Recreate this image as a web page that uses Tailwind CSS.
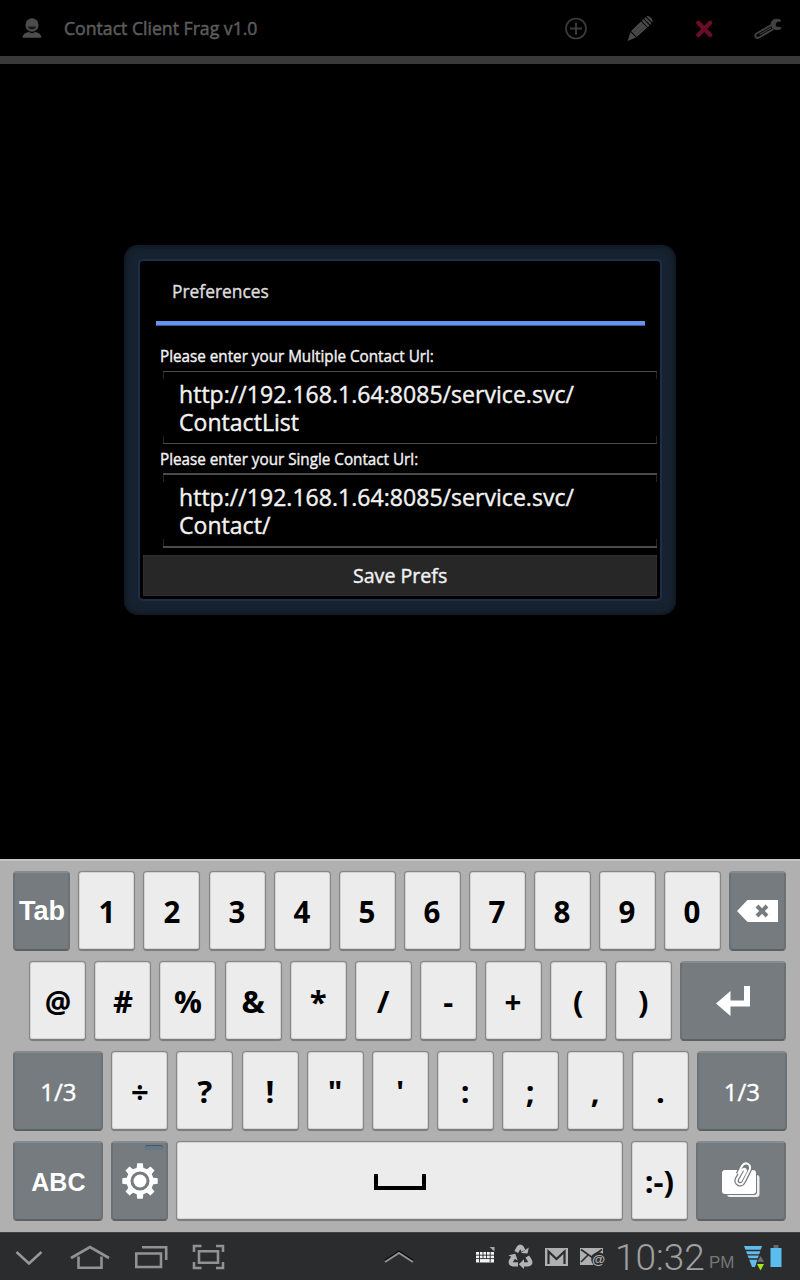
<!DOCTYPE html>
<html lang="en">
<head>
<meta charset="utf-8">
<title>Contact Client Frag</title>
<script src="https://cdn.jsdelivr.net/npm/@tailwindcss/browser@4"></script>
</head>
<body class="bg-black">
<div class="w-[800px] h-[1280px] flex flex-col bg-black overflow-hidden font-['Open_Sans','Noto_Sans',sans-serif] whitespace-nowrap">

  <!-- Action bar -->
  <header class="h-[64px] shrink-0 flex items-center border-b-8 border-[#393939] pl-[22px] pr-[18px] text-[#5c5c5c]">
    <svg class="w-[20px] h-[20px]" viewBox="0 0 20 20" fill="#4c4c4c"><ellipse cx="10" cy="7" rx="6.6" ry="6.8"/><path d="M6 8.500H14C13.500 10.800 12.300 11.500 10 11.500S6.500 10.800 6 8.500Z" fill="#181818"/><path d="M0.500 19.700C0.800 16.500 3 14.500 6.500 14L10 15.300 13.500 14C17 14.500 19.200 16.500 19.500 19.700Z"/></svg>
    <h1 class="ml-[22px] text-[18px] leading-6 [-webkit-text-stroke:0.5px]"><span class="inline-block origin-left scale-x-[0.98]">Contact Client Frag v1.0</span></h1>
    <div class="ml-auto flex items-center gap-[36px]">
      <svg class="w-[28px] h-[28px]" viewBox="0 0 28 28" fill="none" stroke="#3c3c3c" stroke-width="1.700"><circle cx="14" cy="14.500" r="10"/><path d="M8 14.500H20M14 8.500V20.500" stroke-width="1.900"/></svg>
      <svg class="w-[28px] h-[28px]" viewBox="0 0 28 28" fill="#4a4a4a"><path d="M1.500 27L4.500 18 10 23.500Z"/><path d="M5 17L15 7.500 21 13.500 10.800 23Z"/><path d="M15.700 6.700L17.500 5.200 23.500 11.500 21.700 13.200ZM18.200 4.500L19.800 3.300 25.500 9.300 24.200 10.800ZM20.500 2.500C22.500.5 28 5.500 26.300 8.500Z"/><path d="M8 18L16.500 10M10 20.500L19 12.500" stroke="#303030" stroke-width=".7"/></svg>
      <svg class="w-[28px] h-[28px]" viewBox="0 0 28 28" stroke="#6b0d29" stroke-width="4.400" stroke-linecap="round"><path d="M8.300 8.800L20.200 21M20.200 8.800L8.300 21"/></svg>
      <svg class="w-[28px] h-[28px]" viewBox="0 0 28 28" fill="none" stroke="#424242" stroke-width="2"><path d="M17.300 11L2.500 19.500C0 21 2 25.500 5 23.500L19.500 15"/><path d="M5.500 20.500L17 13.700" stroke-width="1.100"/><path d="M26.300 5.800C21.500 4 16.700 6 17 10.500 17.300 15.500 24 17 27 14.500L26.500 13.200C22.500 13.800 21 12.500 21.500 10 22 7.800 23.500 7.300 26.300 7.300Z" fill="#424242" stroke-width=".8"/></svg>
    </div>
  </header>

  <!-- Dialog -->
  <main class="flex-1 pt-[181px] flex justify-center items-start">
    <section class="w-[552px] h-[370px] rounded-[14px] bg-[#172230] p-[14px] shadow-[inset_0_0_6px_#0a0e14]">
      <div class="w-[524px] h-[342px] rounded-[5px] border-2 border-[#1e2e48] bg-black text-[#f2f2f2] px-[3px] flex flex-col [-webkit-text-stroke:0.4px]">
        <h2 class="h-[60px] pl-[29px] pt-[18px] text-[18px] leading-6 text-[#dcdcdc]"><span class="inline-block origin-left scale-x-[0.965]">Preferences</span></h2>
        <div class="ml-[12.600px] w-[489px] h-[4px] bg-[#6594ec] shadow-[0_1px_0_#3c5b92]"></div>
        <label class="h-[46px] pl-[17px] pt-[20px] text-[16px] leading-[22px]"><span class="inline-block origin-left scale-x-[0.952]">Please enter your Multiple Contact Url:</span></label>
        <div class="relative ml-[20px] w-[494px] h-[73px] border-y border-[#4b4b4b] pl-[16px] pt-[8px] text-[23px] leading-[28px]">
          <i class="absolute left-0 top-0 w-px h-[7px] bg-[#242424]"></i><i class="absolute right-0 top-0 w-px h-[7px] bg-[#242424]"></i><i class="absolute left-0 bottom-0 w-px h-[7px] bg-[#242424]"></i><i class="absolute right-0 bottom-0 w-px h-[7px] bg-[#242424]"></i>
          <p class="tracking-[0.04px]">http://192.168.1.64:8085/service.svc/<br>ContactList</p>
        </div>
        <label class="h-[29px] pl-[17px] pt-[4px] text-[16px] leading-[22px]"><span class="inline-block origin-left scale-x-[0.952]">Please enter your Single Contact Url:</span></label>
        <div class="relative ml-[20px] w-[494px] h-[75px] border-y-2 border-[#4b4b4b] pl-[16px] pt-[8px] text-[23px] leading-[28px]">
          <i class="absolute left-0 top-0 w-px h-[7px] bg-[#242424]"></i><i class="absolute right-0 top-0 w-px h-[7px] bg-[#242424]"></i><i class="absolute left-0 bottom-0 w-px h-[7px] bg-[#242424]"></i><i class="absolute right-0 bottom-0 w-px h-[7px] bg-[#242424]"></i>
          <p class="tracking-[0.04px]">http://192.168.1.64:8085/service.svc/<br>Contact/</p>
        </div>
        <button class="mt-[7px] w-[514px] h-[41px] bg-[#272727] border border-[#2e2e2e] text-[20px] leading-[37px]"><span class="inline-block scale-x-[0.98]">Save Prefs</span></button>
      </div>
    </section>
  </main>

  <!-- Keyboard -->
  <section class="h-[373px] shrink-0 bg-[#b0b0b0] border-t-2 border-[#c6c6c6] pt-[10px] pl-[13.400px] flex flex-col gap-[10px] text-black font-bold text-[31px] [&>div]:flex [&>div]:gap-[8.050px] [&>div]:h-[80px] [&_span]:w-[57px] [&_span]:flex [&_span]:items-center [&_span]:justify-center [&_span]:pt-[2px] [&_span]:border [&_span]:border-[#868686] [&_span]:border-b-2 [&_span]:border-b-[#7d7d7d] [&_span]:shadow-[inset_0_0_0_1px_#d4d4d4,0_0_1px_#909090] [&_span]:rounded-[4px] [&_span]:bg-[#ececec] [&_em]:not-italic [&_em]:inline-block [&_em]:scale-x-[0.95] [&_b]:flex [&_b]:items-center [&_b]:justify-center [&_b]:rounded-[4px] [&_b]:border-2 [&_b]:border-[#6b7174] [&_b]:border-t-[#858b8e] [&_b]:border-b-[#5c6163] [&_b]:bg-[#757b7e] [&_b]:text-white">
    <div>
      <b class="w-[57px] font-['Liberation_Sans',sans-serif] text-[27px]">Tab</b><span><em>1</em></span><span><em>2</em></span><span><em>3</em></span><span><em>4</em></span><span><em>5</em></span><span><em>6</em></span><span><em>7</em></span><span><em>8</em></span><span><em>9</em></span><span><em>0</em></span>
      <b class="w-[57px]"><svg class="w-[41px] h-[22px] shrink-0" viewBox="0 0 41 22"><path d="M0 11L10.500 0H41V22H10.500Z" fill="#fff"/><path d="M20 6L30 16M30 6L20 16" stroke="#757b7e" stroke-width="4"/></svg></b>
    </div>
    <div class="pl-[16px]">
      <span><em>@</em></span><span>#</span><span>%</span><span>&amp;</span><span>*</span><span>/</span><span>-</span><span><em>+</em></span><span>(</span><span>)</span>
      <b class="w-[106px]"><svg class="w-[34px] h-[30px]" viewBox="0 0 34 30" fill="#fff"><path d="M0 17.500L14.500 5V14.500H28V0H34V20.500H14.500V30Z"/></svg></b>
    </div>
    <div>
      <b class="w-[90px] font-medium text-[24px] pt-[2px] [-webkit-text-stroke:0.4px]">1/3</b><span>÷</span><span>?</span><span>!</span><span>"</span><span>'</span><span>:</span><span>;</span><span>,</span><span>.</span><b class="w-[90px] font-medium text-[24px] pt-[2px] [-webkit-text-stroke:0.4px]">1/3</b>
    </div>
    <div>
      <b class="w-[90px] pt-[3px] font-['Liberation_Sans',sans-serif] text-[25px]">ABC</b>
      <b class="w-[57px] relative"><i class="absolute right-[3px] top-[2px] w-[18px] h-[5px] rounded-full bg-[#65788a] border-t border-[#485661]"></i>
        <svg class="w-[36px] h-[36px]" viewBox="-18 -18 36 36" fill="#fff"><circle r="11.500" fill="none" stroke="#fff" stroke-width="4"/><circle r="6.500"/><g><path id="t" d="M-3.500 -12L-2.800 -17.700H2.800L3.500 -12Z"/><use href="#t" transform="rotate(45)"/><use href="#t" transform="rotate(90)"/><use href="#t" transform="rotate(135)"/><use href="#t" transform="rotate(180)"/><use href="#t" transform="rotate(225)"/><use href="#t" transform="rotate(270)"/><use href="#t" transform="rotate(315)"/></g></svg></b>
      <span class="!w-[446.300px]"><svg class="w-[52px] h-[16px]" viewBox="0 0 52 16"><path d="M2 0V14H50V0" fill="none" stroke="#000" stroke-width="4"/></svg></span>
      <span>:-)</span>
      <b class="w-[90px]"><svg class="w-[38px] h-[36px] -mt-[2px]" viewBox="0 0 38 36" fill="none"><rect x="5" y="13" width="32.500" height="22" rx="3" fill="#f0f0f0"/><rect x="0" y="8" width="35" height="25" rx="3" fill="#757b7e"/><rect x="0" y="8" width="34" height="24" rx="3" fill="#fff"/><path d="M16 12L20 4C23-1 30 2 27.500 8L21.500 20C19 24.500 13 21.500 15 17L20 8" stroke="#757b7e" stroke-width="4.600"/><path d="M16 12L20 4C23-1 30 2 27.500 8L21.500 20C19 24.500 13 21.500 15 17L20 8.500C22 5.500 25 7 23.500 10L18.500 19" stroke="#fff" stroke-width="2"/></svg></b>
    </div>
  </section>

  <!-- System bar -->
  <footer class="h-[48px] shrink-0 bg-[#2b2c2e] border-t border-[#404143] flex items-center text-[#a0a0a0]">
    <svg class="ml-[15px] w-[28px] h-[16px] mt-[3px]" viewBox="0 0 28 16" fill="none" stroke="#999" stroke-width="2.500"><path d="M1.500 2L14 13.500 26.500 2"/></svg>
    <svg class="ml-[27px] w-[40px] h-[26px]" viewBox="0 0 40 26" fill="none" stroke="#929292" stroke-width="2.600"><path d="M1 14L20 3 39 14"/><path d="M8.500 12.500V23.800H31.500V12.500"/></svg>
    <svg class="ml-[25px] w-[34px] h-[24px]" viewBox="0 0 34 24" fill="none" stroke="#929292" stroke-width="2.600"><path d="M1.300 8.500H26V22H1.300Z"/><path d="M7 2.300H31.200V15"/></svg>
    <svg class="ml-[23px] w-[34px] h-[26px]" viewBox="0 0 34 26" fill="none" stroke="#929292" stroke-width="2.600"><path d="M7 7.300H26V18.700H7Z"/><path d="M2 8V2H9.500M24 2H31V8M31 18V24H24M9.500 24H2V18"/></svg>
    <svg class="ml-[158px] w-[30px] h-[14px]" viewBox="0 0 30 14" fill="none"><path d="M1 10.500L15 1.500 29 10.500" stroke="#050505" stroke-width="1.500"/><path d="M1 12L15 3 29 12" stroke="#929292" stroke-width="2"/></svg>
    <svg class="ml-[62px] w-[20px] h-[17px] -mt-[2px]" viewBox="0 0 20 17" fill="#f4f4f4"><path d="M0 5H18V15.500H0Z"/><path d="M0 8.200H18M0 11.600H18M3.500 5V12M7 5V12M10.500 5V12M14.200 5V12M3.500 12V15.500M14.200 12V15.500" stroke="#2b2c2e" stroke-width=".9"/><path d="M13.500 0H18.500V4.500Z" fill="#aaa"/></svg>
    <svg class="ml-[12px] w-[25px] h-[25px]" viewBox="0 0 25 25" fill="none" stroke="#b4b4b4" stroke-width="4.300"><path d="M8.300 8L10.700 3.700Q12.200 1.800 13.800 3.700L15.500 6.700"/><path d="M19.300 12.500L22 17Q23 20 20 20.300H15"/><path d="M10 20.300H5Q2 20 3 17L5.500 13"/><path d="M12.800 9L19.500 9.500 20.800 3.500ZM16 15.200V25L10.800 20.200ZM.5 11.300L7.300 9.800 9.700 16.500Z" fill="#b4b4b4" stroke="none"/></svg>
    <svg class="ml-[12px] w-[23px] h-[18px]" viewBox="0 0 23 18"><rect width="23" height="18" fill="#b0b0b0"/><path d="M3.500 16V3.500L11.500 11 19.500 3.500V16" fill="none" stroke="#2b2c2e" stroke-width="2.200"/></svg>
    <svg class="ml-[12px] w-[26px] h-[20px]" viewBox="0 0 26 20"><rect width="23" height="17" y="1" fill="#b0b0b0"/><path d="M1 2.500L11.500 10 22 2.500M1 15L8 8" fill="none" stroke="#2b2c2e" stroke-width="1.600"/><circle cx="18.500" cy="12.500" r="7.300" fill="#2b2c2e"/><text x="18.500" y="17" text-anchor="middle" font-family="Liberation Sans" font-weight="bold" font-size="13.500" fill="#b0b0b0">@</text></svg>
    <span class="ml-[9px] w-[88px] font-['Roboto',sans-serif] font-light text-[37px] leading-[46px] mt-[2px]">10:32</span>
    <span class="ml-[6px] mt-[13px] w-[26px] font-['Liberation_Sans',sans-serif] font-normal text-[17px] text-[#777]">PM</span>
    <svg class="ml-[8px] w-[22px] h-[26px] mt-[3px]" viewBox="0 0 22 26"><path d="M1 1H19L12 22H9Z" fill="#62bce9"/><path d="M0 5.500H20M0 9.800H20M0 14H20" stroke="#2b2c2e" stroke-width="1.300"/><path d="M14 17L17.500 10.500 21.500 17Z" fill="#6f6f6f" stroke="#2b2c2e" stroke-width=".6"/><path d="M14 19H21L17.500 25.500Z" fill="#a5e51b"/></svg>
    <svg class="ml-[5px] w-[12px] h-[22px] -mt-[1px]" viewBox="0 0 12 22"><path d="M3.500 0H8.500V3H3.500Z" fill="#666"/><path d="M.5 3H11.500V22H.5Z" fill="#5bbcf0"/></svg>
  </footer>
</div>
</body>
</html>
